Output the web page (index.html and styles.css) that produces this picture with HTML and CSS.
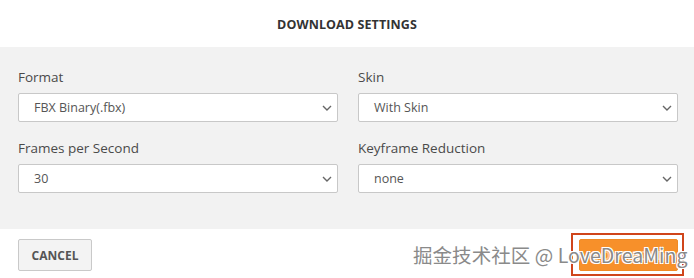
FILE: index.html
```html
<!DOCTYPE html>
<html>
<head>
<meta charset="utf-8">
<link rel="stylesheet" href="styles.css">
</head>
<body>
<div class="dialog">
  <div class="header">DOWNLOAD SETTINGS</div>
  <div class="body">
    <div class="grid">
      <div class="field">
        <div class="label">Format</div>
        <div class="select"><span>FBX Binary(.fbx)</span><svg class="chev" width="10" height="6" viewBox="0 0 10 6"><path d="M1 1l4 4 4-4" fill="none" stroke="#666" stroke-width="1.4"/></svg></div>
      </div>
      <div class="field">
        <div class="label">Skin</div>
        <div class="select"><span>With Skin</span><svg class="chev" width="10" height="6" viewBox="0 0 10 6"><path d="M1 1l4 4 4-4" fill="none" stroke="#666" stroke-width="1.4"/></svg></div>
      </div>
      <div class="field">
        <div class="label">Frames per Second</div>
        <div class="select"><span>30</span><svg class="chev" width="10" height="6" viewBox="0 0 10 6"><path d="M1 1l4 4 4-4" fill="none" stroke="#666" stroke-width="1.4"/></svg></div>
      </div>
      <div class="field">
        <div class="label">Keyframe Reduction</div>
        <div class="select"><span>none</span><svg class="chev" width="10" height="6" viewBox="0 0 10 6"><path d="M1 1l4 4 4-4" fill="none" stroke="#666" stroke-width="1.4"/></svg></div>
      </div>
    </div>
  </div>
  <div class="footer">
    <button class="btn cancel">CANCEL</button>
    <div class="dl-wrap"><button class="btn download">DOWNLOAD</button></div>
  </div>
  <div class="watermark">掘金技术社区 @ LoveDreaMing</div>
</div>
</body>
</html>
```
FILE: styles.css
```css
* { box-sizing: border-box; }
html, body { margin: 0; padding: 0; background: #fff; }
body { font-family: "Open Sans", "Noto Sans", sans-serif; color: #444; }
.dialog { position: relative; width: 694px; height: 278px; overflow: hidden; }
.header {
  height: 47px;
  display: flex; align-items: center; justify-content: center;
  font-size: 12.5px; font-weight: 700; color: #333;
  letter-spacing: 0.1px;
  padding-top: 1px;
}
.body { background: #f2f2f2; padding: 20px 16px 36px 18px; height: 182px; }
.grid { display: grid; grid-template-columns: 320px 320px; column-gap: 20px; row-gap: 16px; }
.label { font-size: 13.5px; color: #4a4a4a; height: 20px; line-height: 20px; margin-bottom: 6px; }
.select {
  height: 29px; background: #fff; border: 1px solid #c8c8c8; border-radius: 2px;
  display: flex; align-items: center; justify-content: space-between;
  padding: 0 5px 0 15px; font-size: 12.5px; color: #555;
}
.chev { margin-top: 1px; }
.footer { display: flex; justify-content: space-between; align-items: flex-start; padding: 10px 16px 0 18px; height: 49px; }
.btn {
  font-family: inherit; font-weight: 700; font-size: 12px; height: 32px; border-radius: 2px; cursor: pointer;
}
.cancel { width: 74px; background: #f3f3f3; border: 1px solid #c9c9c9; color: #555; }
.dl-wrap { position: relative; }
.dl-wrap::before {
  content: ""; position: absolute; left: -8px; top: -6px; right: -6px; bottom: -5px;
  border: 2px solid #d0451b;
}
.download { position: relative; width: 99px; background: #f7902a; border: 1px solid #f08a25; color: #f9c48a; }
.watermark {
  position: absolute; left: 413px; top: 240px;
  font-family: "Noto Sans CJK SC", "Noto Sans", sans-serif; font-size: 19.5px; color: #8a8a8a;
  text-shadow: 0 0 1px #fff, 1px 1px 0 #fff, -1px -1px 0 #fff, 1px -1px 0 #fff, -1px 1px 0 #fff;
  white-space: nowrap; letter-spacing: 0.05px;
}
```
